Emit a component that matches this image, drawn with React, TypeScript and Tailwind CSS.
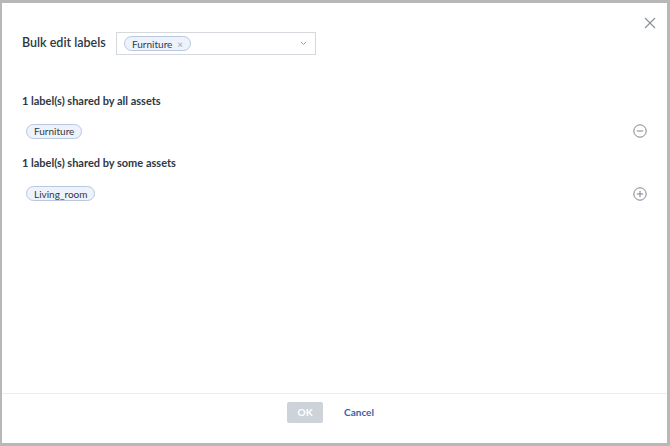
import React from "react";

const font = { fontFamily: "Lato, 'Open Sans', sans-serif" };

function Chip({ children, removable }: { children: React.ReactNode; removable?: boolean }) {
  return (
    <span className="inline-flex items-center h-[15px] px-[7px] rounded-full border border-[#b9c7e0] bg-[#eef2fa] text-[10px] leading-none text-[#2f3a48]">
      {children}
      {removable && <span className="ml-[5px] text-[#a0a8b4] text-[10px]">×</span>}
    </span>
  );
}

function CircleIcon({ plus }: { plus?: boolean }) {
  return (
    <svg width="14" height="14" viewBox="0 0 14 14" fill="none" stroke="#7d838c" strokeWidth="1">
      <circle cx="7" cy="7" r="6.2" />
      <line x1="3.8" y1="7" x2="10.2" y2="7" />
      {plus && <line x1="7" y1="3.8" x2="7" y2="10.2" />}
    </svg>
  );
}

export default function App() {
  return (
    <div className="w-[670px] h-[446px] bg-[#b8b8b8] pt-[3px] pl-[2px] pr-[3px] pb-[3px]" style={font}>
      <div className="w-full h-full bg-white flex flex-col">
        <div className="flex-1 flex flex-col">
          <div className="flex justify-end pt-[14px] pr-[11px] h-[29px]">
            <svg width="12" height="12" viewBox="0 0 12 12" stroke="#8a8f96" strokeWidth="1.1">
              <line x1="1" y1="1" x2="11" y2="11" />
              <line x1="11" y1="1" x2="1" y2="11" />
            </svg>
          </div>
          <div className="flex items-center pl-[20px]">
            <span className="text-[12.5px] font-semibold text-[#2d3846] w-[94px]">Bulk edit labels</span>
            <div className="w-[200px] h-[23px] border border-[#d5d8dc] flex items-center pl-[7px] pr-[8px]">
              <Chip removable>Furniture</Chip>
              <div className="flex-1" />
              <svg width="7" height="5" viewBox="0 0 7 5" fill="none" stroke="#9aa0a8" strokeWidth="1">
                <polyline points="1,1 3.5,3.5 6,1" />
              </svg>
            </div>
          </div>
          <div className="pl-[20px] pt-[38px] text-[11px] font-bold text-[#2d3846]">1 label(s) shared by all assets</div>
          <div className="flex items-center justify-between pl-[24px] pr-[20px] pt-[14px]">
            <Chip>Furniture</Chip>
            <CircleIcon />
          </div>
          <div className="pl-[20px] pt-[16px] text-[11px] font-bold text-[#2d3846]">1 label(s) shared by some assets</div>
          <div className="flex items-center justify-between pl-[24px] pr-[20px] pt-[15px]">
            <Chip>Living_room</Chip>
            <CircleIcon plus />
          </div>
        </div>
        <div className="h-[50px] border-t border-[#ececec] flex items-start justify-center pt-[8px]">
          <div className="w-[36px] h-[21px] ml-[-8px] rounded-[2px] bg-[#ced3da] text-white text-[10px] font-bold flex items-center justify-center">OK</div>
          <div className="ml-[21px] h-[21px] flex items-center text-[10px] font-bold text-[#3a62a7]">Cancel</div>
        </div>
      </div>
    </div>
  );
}
